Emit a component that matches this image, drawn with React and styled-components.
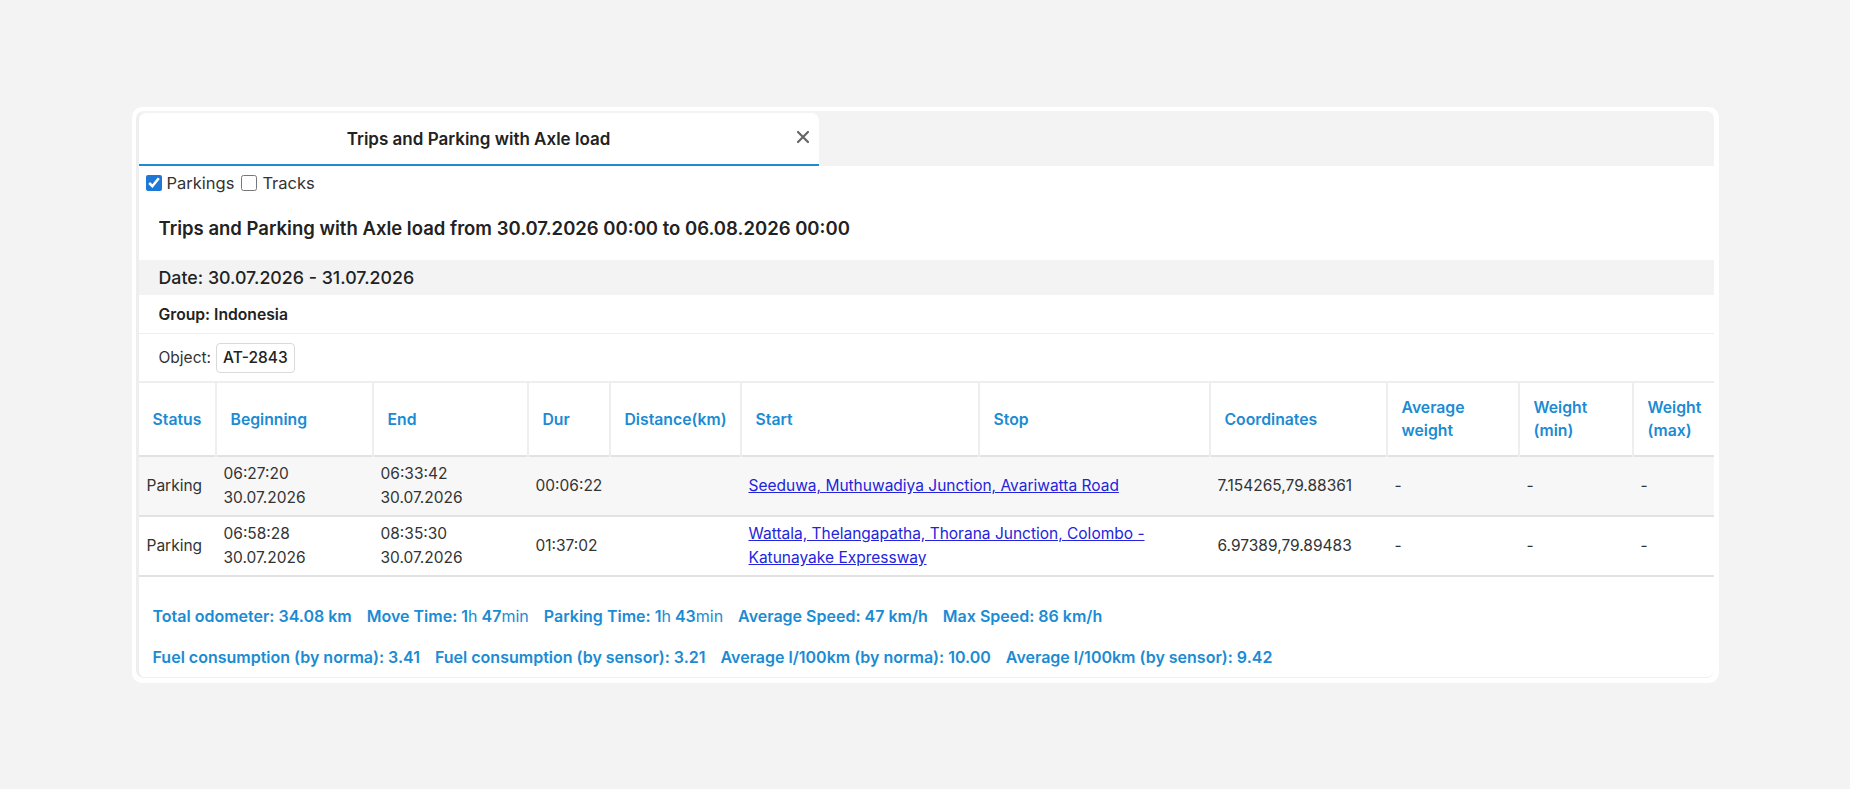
import styled, { createGlobalStyle } from 'styled-components';

const GlobalStyle = createGlobalStyle`
  body {
    margin: 0;
    background: #f3f3f3;
    font-family: Inter, "Noto Sans", sans-serif;
    color: #333;
  }
`;

const Page = styled.div`
  padding-top: 107px;
  min-height: 789px;
  box-sizing: border-box;
`;

const Card = styled.div`
  width: 1587px;
  margin: 0 auto;
  background: #fff;
  border-radius: 10px;
  padding: 4px 5px 5px 4px;
  box-sizing: border-box;
`;

const Inner = styled.div`
  border-left: 3px solid #eeeeee;
  border-bottom: 1px solid #f0f0f0;
  border-radius: 8px;
  overflow: hidden;
`;

const TabBar = styled.div`
  display: flex;
  background: #f3f3f3;
  padding-top: 2px;
`;

const Tab = styled.div`
  width: 680px;
  height: 51px;
  display: grid;
  grid-template-columns: 32px 1fr 32px;
  align-items: center;
  background: #fff;
  border-radius: 8px 8px 0 0;
  border-bottom: 2px solid #1d8ad2;
`;

const TabTitle = styled.div`
  grid-column: 2;
  text-align: center;
  font-size: 17px;
  font-weight: 600;
  color: #222;
`;

const CloseButton = styled.button`
  grid-column: 3;
  border: none;
  background: none;
  padding: 0;
  display: flex;
  align-items: center;
  justify-content: center;
  margin-top: -3px;
  cursor: pointer;
`;

const Options = styled.div`
  display: flex;
  align-items: center;
  gap: 7px;
  height: 34px;
  padding-left: 7px;
  font-size: 16.5px;
  color: #333;
`;

const Option = styled.label`
  display: flex;
  align-items: center;
  gap: 5px;
`;

const Check = styled.input`
  width: 16px;
  height: 16px;
  margin: 0;
  accent-color: #1f78d6;
`;

const Heading = styled.h2`
  margin: 0;
  padding: 16px 20px 20px;
  font-size: 18.5px;
  line-height: 24px;
  font-weight: 600;
  color: #222;
`;

const InfoRow = styled.div`
  display: flex;
  align-items: center;
  gap: 5px;
  padding: 0 20px;
  height: ${(p) => p.$h}px;
  background: ${(p) => (p.$shaded ? '#f3f3f3' : '#fff')};
  border-bottom: ${(p) => (p.$line ? '1px solid #eeeeee' : 'none')};
  font-size: ${(p) => p.$size || 15.5}px;
  font-weight: ${(p) => p.$weight || 400};
  color: ${(p) => (p.$weight ? '#222' : '#333')};
`;

const ObjectBox = styled.span`
  display: inline-flex;
  align-items: center;
  height: 28px;
  padding: 0 6px;
  border: 1px solid #d9d9d9;
  border-radius: 4px;
  font-weight: 500;
  color: #222;
`;

const Table = styled.table`
  width: 100%;
  border-collapse: collapse;
  table-layout: fixed;
  font-size: 15.5px;
`;

const Th = styled.th`
  height: 74px;
  box-sizing: border-box;
  padding: 0 14px;
  border-top: 2px solid #eeeeee;
  border-right: 2px solid #eeeeee;
  text-align: left;
  vertical-align: middle;
  font-size: 15.75px;
  font-weight: 600;
  line-height: 23px;
  color: #1b8bd3;

  &:last-child {
    border-right: none;
  }
`;

const Tr = styled.tr`
  background: ${(p) => (p.$shaded ? '#f7f7f7' : '#fff')};
  border-top: 2px solid #e2e2e2;

  &:last-child {
    border-bottom: 2px solid #e2e2e2;
  }
`;

const Td = styled.td`
  height: 60px;
  box-sizing: border-box;
  padding: 5px 8px;
  line-height: 24px;
  color: #333;
  vertical-align: middle;
`;

const Place = styled.a`
  color: #2424dc;
  text-decoration: underline;
`;

const Summary = styled.div`
  display: flex;
  flex-direction: column;
  gap: 17px;
  padding: 27px 14px 8px;
`;

const SummaryLine = styled.div`
  display: flex;
  gap: 15px;
  font-size: 16px;
  line-height: 24px;
  font-weight: 600;
  color: #1b8bd3;
`;

const Unit = styled.span`
  font-weight: 400;
`;

const columns = [77, 157, 155, 82, 131, 238, 231, 177, 132, 114, 81];

const headers = [
  'Status',
  'Beginning',
  'End',
  'Dur',
  'Distance(km)',
  'Start',
  'Stop',
  'Coordinates',
  ['Average', 'weight'],
  ['Weight', '(min)'],
  ['Weight', '(max)'],
];

const rows = [
  {
    status: 'Parking',
    begin: ['06:27:20', '30.07.2026'],
    end: ['06:33:42', '30.07.2026'],
    dur: '00:06:22',
    place: 'Seeduwa, Muthuwadiya Junction, Avariwatta Road',
    coords: '7.154265,79.88361',
  },
  {
    status: 'Parking',
    begin: ['06:58:28', '30.07.2026'],
    end: ['08:35:30', '30.07.2026'],
    dur: '01:37:02',
    place: 'Wattala, Thelangapatha, Thorana Junction, Colombo - Katunayake Expressway',
    coords: '6.97389,79.89483',
  },
];

const CloseIcon = () => (
  <svg width="16" height="16" viewBox="0 0 16 16">
    <path d="M3 3 L13 13 M13 3 L3 13" stroke="#666" strokeWidth="2.2" strokeLinecap="round" />
  </svg>
);

const Lines = ({ value }) =>
  Array.isArray(value) ? (
    <>
      {value[0]}
      <br />
      {value[1]}
    </>
  ) : (
    value
  );

export default function App() {
  return (
    <Page>
      <GlobalStyle />
      <Card>
        <Inner>
          <TabBar>
            <Tab>
              <TabTitle>Trips and Parking with Axle load</TabTitle>
              <CloseButton aria-label="Close">
                <CloseIcon />
              </CloseButton>
            </Tab>
          </TabBar>

          <Options>
            <Option>
              <Check type="checkbox" defaultChecked />
              Parkings
            </Option>
            <Option>
              <Check type="checkbox" />
              Tracks
            </Option>
          </Options>

          <Heading>Trips and Parking with Axle load from 30.07.2026 00:00 to 06.08.2026 00:00</Heading>

          <InfoRow $h={35} $shaded $size={17.8} $weight={500}>
            Date: 30.07.2026 - 31.07.2026
          </InfoRow>
          <InfoRow $h={38} $line $size={15.7} $weight={600}>
            Group: Indonesia
          </InfoRow>
          <InfoRow $h={47}>
            Object: <ObjectBox>AT-2843</ObjectBox>
          </InfoRow>

          <Table>
            <colgroup>
              {columns.map((w, i) => (
                <col key={i} style={{ width: w }} />
              ))}
            </colgroup>
            <thead>
              <tr>
                {headers.map((h, i) => (
                  <Th key={i}>
                    <Lines value={h} />
                  </Th>
                ))}
              </tr>
            </thead>
            <tbody>
              {rows.map((r, i) => (
                <Tr key={i} $shaded={i === 0}>
                  <Td>{r.status}</Td>
                  <Td>
                    <Lines value={r.begin} />
                  </Td>
                  <Td>
                    <Lines value={r.end} />
                  </Td>
                  <Td>{r.dur}</Td>
                  <Td></Td>
                  <Td colSpan={2}>
                    <Place href="#">{r.place}</Place>
                  </Td>
                  <Td>{r.coords}</Td>
                  <Td>-</Td>
                  <Td>-</Td>
                  <Td>-</Td>
                </Tr>
              ))}
            </tbody>
          </Table>

          <Summary>
            <SummaryLine>
              <span>Total odometer: 34.08 km</span>
              <span>
                Move Time: 1<Unit>h</Unit> 47<Unit>min</Unit>
              </span>
              <span>
                Parking Time: 1<Unit>h</Unit> 43<Unit>min</Unit>
              </span>
              <span>Average Speed: 47 km/h</span>
              <span>Max Speed: 86 km/h</span>
            </SummaryLine>
            <SummaryLine>
              <span>Fuel consumption (by norma): 3.41</span>
              <span>Fuel consumption (by sensor): 3.21</span>
              <span>Average l/100km (by norma): 10.00</span>
              <span>Average l/100km (by sensor): 9.42</span>
            </SummaryLine>
          </Summary>
        </Inner>
      </Card>
    </Page>
  );
}
